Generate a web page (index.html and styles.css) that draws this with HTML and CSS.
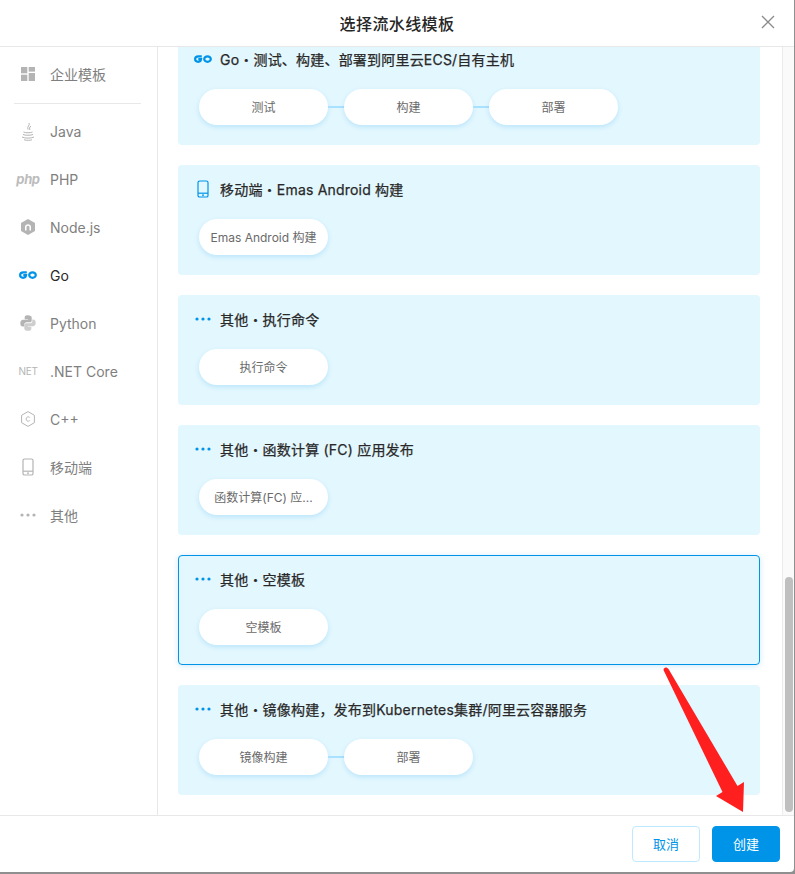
FILE: index.html
```html
<!DOCTYPE html>
<html lang="zh">
<head>
<meta charset="utf-8">
<title>选择流水线模板</title>
<link rel="stylesheet" href="styles.css">
</head>
<body>
<svg class="defs" width="0" height="0" aria-hidden="true">
  <defs>
    <symbol id="i-go" viewBox="0 0 18 8"><g fill="none" stroke="currentColor" stroke-width="2.200"><path d="M7.800 1.400H4.400C2.500 1.400 1.100 2.500 1.100 4.100S2.400 6.800 4.200 6.800C5.800 6.800 6.900 5.900 7.100 4.200H4.300"/><ellipse cx="13.500" cy="4.100" rx="3.300" ry="2.700"/></g></symbol>
    <symbol id="i-dots" viewBox="0 0 16 4"><circle cx="2" cy="2" r="1.600" fill="currentColor"/><circle cx="8" cy="2" r="1.600" fill="currentColor"/><circle cx="14" cy="2" r="1.600" fill="currentColor"/></symbol>
    <symbol id="i-phone" viewBox="0 0 12 18"><rect x="1" y="1" width="10" height="16" rx="1.600" fill="none" stroke="currentColor" stroke-width="1.200"/><path d="M1 13.200H11" stroke="currentColor" stroke-width="1.200"/><path d="M5 15.200H7" stroke="currentColor" stroke-width="1.200"/></symbol>
  </defs>
</svg>
<div class="modal">
  <header class="head">
    <h1 class="head-title">选择流水线模板</h1>
    <button class="close" aria-label="关闭"><svg width="14" height="14" viewBox="0 0 14 14"><path d="M1 1L13 13M13 1L1 13" stroke="#8a8a8a" stroke-width="1.300" fill="none"/></svg></button>
  </header>
  <div class="body">
    <nav class="side">
      <a class="nav-item"><span class="nav-icon"><svg width="14" height="14" viewBox="0 0 14 14" fill="currentColor"><rect width="6.300" height="6.300"/><rect x="7.700" width="6.300" height="4.600"/><rect y="7.700" width="6.300" height="6.300"/><rect x="7.700" y="6" width="6.300" height="8"/></svg></span>企业模板</a>
      <div class="nav-sep"></div>
      <a class="nav-item"><span class="nav-icon"><svg width="16" height="19" viewBox="0 0 16 19" fill="none" stroke="currentColor" stroke-width="1"><path d="M9 1C10.500 3 6.500 4.500 8 7.500M11 4C9 5.500 9.500 6.500 10 8"/><path d="M3.500 10C5 11 11 11 12.500 10M3 12.500C5 13.500 11 13.500 13 12.500M2 15C5 16.500 11 16.500 14 15M4 17.800C7 18.500 10 18.500 12 17.800"/></svg></span>Java</a>
      <a class="nav-item"><span class="nav-icon nav-php">php</span>PHP</a>
      <a class="nav-item"><span class="nav-icon"><svg width="14" height="16" viewBox="0 0 14 16"><path d="M7 0L14 4V12L7 16L0 12V4Z" fill="currentColor"/><path d="M4 11.500V8C4 4.300 10 4.300 10 8V11.500H8.500V8.300C8.500 6.300 5.500 6.300 5.500 8.300V11.500Z" fill="#fff"/></svg></span>Node.js</a>
      <a class="nav-item nav-active"><span class="nav-icon"><svg width="18" height="8"><use href="#i-go"/></svg></span>Go</a>
      <a class="nav-item"><span class="nav-icon"><svg width="16" height="16" viewBox="0 0 16 16" fill="currentColor"><path d="M7.900 0.300C5 0.300 4.700 1.400 4.700 2.600V4.200H8.100V4.800H3C1.400 4.800 0.300 6 0.300 8.200C0.300 10.400 1.400 11.500 2.700 11.500H4.200V9.700C4.200 8.200 5.400 7.300 6.700 7.300H9.900C11 7.300 11.700 6.500 11.700 5.500V2.600C11.700 1.200 10.300 0.300 7.900 0.300Z"/><path d="M8.100 15.700C11 15.700 11.300 14.600 11.300 13.400V11.800H7.900V11.200H13C14.600 11.200 15.700 10 15.700 7.800C15.700 5.600 14.600 4.500 13.300 4.500H12.300V6.300C12.300 7.800 11.100 8.300 9.800 8.300H6.100C5 8.300 4.300 9.500 4.300 10.500V13.400C4.300 14.800 5.700 15.700 8.100 15.700Z" opacity=".65"/></svg></span>Python</a>
      <a class="nav-item"><span class="nav-icon nav-net">NET</span>.NET Core</a>
      <a class="nav-item"><span class="nav-icon"><svg width="14" height="16" viewBox="0 0 14 16" fill="none" stroke="currentColor" stroke-width="1"><path d="M7 .6L13.400 4.300V11.700L7 15.400L.6 11.700V4.300Z"/><path d="M8.800 6.600C8 5.400 5.200 5.500 5.200 8C5.200 10.500 8 10.600 8.800 9.400"/></svg></span>C++</a>
      <a class="nav-item"><span class="nav-icon"><svg width="12" height="18"><use href="#i-phone"/></svg></span>移动端</a>
      <a class="nav-item"><span class="nav-icon"><svg width="16" height="4"><use href="#i-dots"/></svg></span>其他</a>
    </nav>
    <main class="main">
      <div class="list">
        <section class="card">
          <h2 class="card-title"><span class="card-icon"><svg width="18" height="8"><use href="#i-go"/></svg></span>Go・测试、构建、部署到阿里云ECS/自有主机</h2>
          <div class="flow"><span class="pill">测试</span><i class="link"></i><span class="pill">构建</span><i class="link"></i><span class="pill">部署</span></div>
        </section>
        <section class="card">
          <h2 class="card-title"><span class="card-icon"><svg width="12" height="18"><use href="#i-phone"/></svg></span>移动端・Emas Android 构建</h2>
          <div class="flow"><span class="pill">Emas Android 构建</span></div>
        </section>
        <section class="card">
          <h2 class="card-title"><span class="card-icon"><svg width="16" height="4"><use href="#i-dots"/></svg></span>其他・执行命令</h2>
          <div class="flow"><span class="pill">执行命令</span></div>
        </section>
        <section class="card">
          <h2 class="card-title"><span class="card-icon"><svg width="16" height="4"><use href="#i-dots"/></svg></span>其他・函数计算 (FC) 应用发布</h2>
          <div class="flow"><span class="pill">函数计算(FC) 应...</span></div>
        </section>
        <section class="card card-selected">
          <h2 class="card-title"><span class="card-icon"><svg width="16" height="4"><use href="#i-dots"/></svg></span>其他・空模板</h2>
          <div class="flow"><span class="pill">空模板</span></div>
        </section>
        <section class="card">
          <h2 class="card-title"><span class="card-icon"><svg width="16" height="4"><use href="#i-dots"/></svg></span>其他・镜像构建，发布到Kubernetes集群/阿里云容器服务</h2>
          <div class="flow"><span class="pill">镜像构建</span><i class="link"></i><span class="pill">部署</span></div>
        </section>
      </div>
      <div class="scrollbar"><div class="thumb"></div></div>
    </main>
  </div>
  <footer class="foot">
    <button class="btn btn-ghost">取消</button>
    <button class="btn btn-primary">创建</button>
  </footer>
</div>
<svg class="arrow" width="795" height="874" viewBox="0 0 795 874" aria-hidden="true"><path d="M663.500 670C663.500 667 667 666.500 668.500 669L737.500 786L744 782L743 812L716 796L722.500 792Z" fill="#ff1f1f"/></svg>
</body>
</html>
```

FILE: styles.css
```css
* { box-sizing: border-box; }
html, body { margin: 0; height: 100%; }
body { background: #8f8f8f; font-family: Inter, "Noto Sans CJK SC", sans-serif; color: #292929; overflow: hidden; }
.defs { position: absolute; }
.modal { width: 794px; height: 872px; background: #fff; display: flex; flex-direction: column; border-bottom-right-radius: 4px; }
.head { height: 47px; flex: none; display: flex; align-items: center; justify-content: center; border-bottom: 1px solid #e8e8e8; position: relative; }
.head-title { margin: 0; font-size: 16px; font-weight: 500; letter-spacing: .4px; color: #262626; }
.close { position: absolute; right: 19px; top: 15px; width: 14px; height: 14px; padding: 0; border: 0; background: none; display: flex; }
.body { flex: 1; min-height: 0; display: flex; }
.side { width: 158px; flex: none; border-right: 1px solid #e8e8e8; padding-top: 3px; }
.nav-item { height: 48px; display: flex; align-items: center; font-size: 14px; color: #7f7f7f; }
.nav-icon { width: 50px; flex: none; display: flex; justify-content: center; align-items: center; padding-left: 6px; color: #b4b4b4; }
.nav-active { color: #292929; }
.nav-active .nav-icon { color: #0094e8; }
.nav-php { font-size: 13px; font-weight: 700; font-style: italic; letter-spacing: -.4px; color: #bcbcbc; }
.nav-net { font-size: 10px; letter-spacing: -.3px; }
.nav-sep { height: 1px; margin: 5px 16px 3px 14px; background: #e8e8e8; }
.main { flex: 1; min-width: 0; position: relative; overflow: hidden; background: #fff; }
.list { display: flex; flex-direction: column; gap: 20px; padding-left: 20px; width: 602px; margin-top: -12px; }
.card { height: 110px; flex: none; background: #e3f7fe; border-radius: 4px; padding: 14px 21px 0; border: 0; }
.card-selected { border: 1px solid #0094e8; padding: 13px 20px 0; box-shadow: 0 1px 6px rgba(0, 148, 232, .2); }
.card-title { margin: 0; height: 20px; display: flex; align-items: center; font-size: 14px; font-weight: 400; -webkit-text-stroke: .25px #292929; color: #292929; letter-spacing: .2px; }
.card-icon { width: 21px; flex: none; display: flex; justify-content: center; color: #0094e8; margin-left: -7px; margin-right: 7px; }
.flow { display: flex; align-items: center; margin-top: 20px; }
.pill { width: 129px; height: 36px; flex: none; border-radius: 18px; background: #fff; box-shadow: 0 2px 5px rgba(0, 148, 232, .18); font-size: 12px; line-height: 37px; text-align: center; color: #6a6a6a; white-space: nowrap; }
.link { width: 16px; height: 2px; flex: none; background: #a8e2ff; }
.scrollbar { position: absolute; top: 0; right: 0; bottom: 0; width: 12px; background: #fafafa; border-left: 1px solid #ebebeb; }
.thumb { position: absolute; left: 2px; right: 1px; bottom: 3px; height: 235px; border-radius: 4px; background: #bfbfbf; }
.foot { height: 57px; flex: none; display: flex; justify-content: flex-end; align-items: flex-start; gap: 12px; padding: 10px 14px 0 0; border-top: 1px solid #e8e8e8; }
.btn { width: 68px; height: 36px; border-radius: 4px; font: 13px/34px Inter, "Noto Sans CJK SC", sans-serif; padding: 0; }
.btn-ghost { background: #fff; border: 1px solid #bfe9ff; color: #0094e8; }
.btn-primary { background: #0094e8; border: 1px solid #0094e8; color: #fff; }
.arrow { position: absolute; left: 0; top: 0; pointer-events: none; }
```
